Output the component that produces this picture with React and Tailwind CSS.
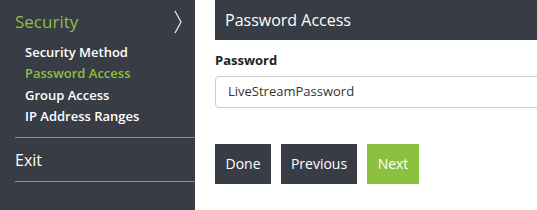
export default function App() {
  return (
    <div className="flex w-[537px] h-[210px] overflow-hidden bg-white font-['Open_Sans',sans-serif]">
      <aside className="w-[195px] shrink-0 bg-[#383c44] pl-[15px] pt-[7px]">
        <div className="flex items-center justify-between h-[30px]">
          <span className="text-[17px] text-[#8cc03f]">Security</span>
          <svg width="10" height="26" viewBox="0 0 10 26" className="mr-[12px]">
            <path d="M2 2 L8 13 L2 24" fill="none" stroke="#e5e7eb" strokeWidth="1.3" />
          </svg>
        </div>
        <ul className="pl-[10px] pt-[5px] text-[13px] font-semibold leading-[21.3px] text-white">
          <li>Security Method</li>
          <li className="text-[#8cc03f]">Password Access</li>
          <li>Group Access</li>
          <li>IP Address Ranges</li>
        </ul>
        <div className="mt-[10px] border-t border-[#8a8d92]" />
        <div className="h-[43px] flex items-center text-[16px] text-white">Exit</div>
        <div className="border-t border-[#8a8d92]" />
      </aside>
      <main className="flex-1 pl-[20px]">
        <div className="h-[40px] bg-[#383c44] pl-[10px] flex items-center text-[16px] text-white">
          Password Access
        </div>
        <div className="mt-[11px] text-[13px] font-bold text-[#222]">Password</div>
        <div className="mt-[5px] h-[32px] w-[340px] border border-[#ccc] rounded-[4px] pl-[12px] flex items-center text-[13px] text-[#333]">
          LiveStreamPassword
        </div>
        <div className="mt-[36px] flex gap-[10px] text-[14px] text-white">
          <button className="h-[40px] w-[56px] bg-[#383c44]">Done</button>
          <button className="h-[40px] w-[76px] bg-[#383c44]">Previous</button>
          <button className="h-[40px] w-[52px] bg-[#8cc03f]">Next</button>
        </div>
      </main>
    </div>
  );
}
